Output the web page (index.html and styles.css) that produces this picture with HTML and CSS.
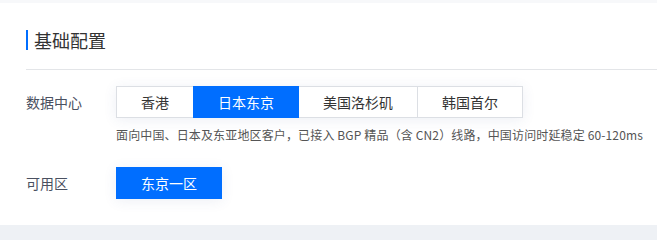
FILE: index.html
```html
<!DOCTYPE html>
<html lang="zh-CN">
<head>
<meta charset="utf-8">
<link rel="stylesheet" href="styles.css">
</head>
<body>
<div class="card">
  <div class="card-header">
    <h2 class="title">基础配置</h2>
  </div>
  <div class="form">
    <div class="row">
      <div class="label">数据中心</div>
      <div class="control">
        <div class="segment">
          <button class="seg-btn">香港</button>
          <button class="seg-btn active">日本东京</button>
          <button class="seg-btn">美国洛杉矶</button>
          <button class="seg-btn">韩国首尔</button>
        </div>
        <p class="desc">面向中国、日本及东亚地区客户，已接入 BGP 精品（含 CN2）线路，中国访问时延稳定 60-120ms</p>
      </div>
    </div>
    <div class="row row-zone">
      <div class="label">可用区</div>
      <div class="control">
        <div class="segment">
          <button class="seg-btn active">东京一区</button>
        </div>
      </div>
    </div>
  </div>
</div>
</body>
</html>
```
FILE: styles.css
```css
html, body {
  margin: 0;
  padding: 0;
}
html {
  background: #eef1f5;
}
body {
  background: #eef1f5;
  font-family: "Noto Sans CJK SC", "Noto Sans", sans-serif;
  color: #333;
  border-top: 3px solid #f7f8fa;
  overflow: hidden;
}
.card {
  background: #fff;
  padding: 0 0 26px 26px;
}
.card-header {
  padding: 27px 0 19px;
  border-bottom: 1px solid #e3e5e8;
}
.title {
  margin: 0;
  font-size: 18px;
  font-weight: 400;
  line-height: 20px;
  color: #333;
  border-left: 2px solid #006eff;
  padding-left: 6px;
}
.form {
  padding-top: 16px;
}
.row {
  display: flex;
  align-items: flex-start;
}
.row-zone {
  margin-top: 23px;
}
.label {
  width: 90px;
  flex: none;
  font-size: 14px;
  line-height: 32px;
  color: #4a5060;
}
.segment {
  display: inline-flex;
  box-shadow: 0 2px 14px rgba(54, 78, 140, 0.09);
}
.seg-btn {
  font-family: inherit;
  font-size: 14px;
  line-height: 30px;
  height: 32px;
  padding: 0 24px;
  margin: 0;
  border: 1px solid #dcdfe4;
  background: #fff;
  color: #333;
  cursor: pointer;
}
.seg-btn + .seg-btn {
  margin-left: -1px;
}
.seg-btn.active {
  background: #006eff;
  border-color: #006eff;
  color: #fff;
  position: relative;
}
.desc {
  margin: 8px 0 0;
  font-size: 12px;
  line-height: 18px;
  color: #555;
  letter-spacing: 0.14px;
  white-space: nowrap;
}
```
